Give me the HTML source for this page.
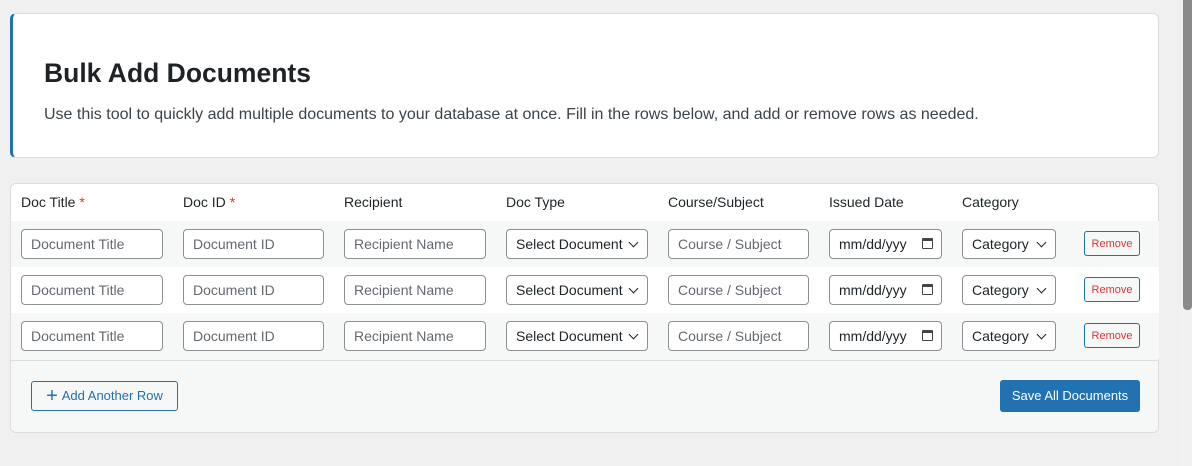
<!DOCTYPE html>
<html><head><style>
body{margin:0;width:1192px;height:466px;background:#f0f0f1;font-family:"Liberation Sans",sans-serif;position:relative;overflow:hidden;color:#1d2327}
.card{position:absolute;left:10px;width:1149px;background:#fff;border:1px solid #dcdcde;border-radius:6px;box-sizing:border-box}
h1{position:absolute;left:44px;top:58px;margin:0;font-size:26.5px;font-weight:600;line-height:30px}
.desc{position:absolute;left:44px;top:106px;font-size:16px;color:#3c434a}
.th{position:absolute;top:194px;font-size:14px;color:#1d2327}
.th b{color:#d63638;font-weight:400}
.row{position:absolute;left:11px;width:1148px;height:46px}
.in{position:absolute;height:30px;top:8px;border:1px solid #8c8f94;border-radius:4px;background:#fff;box-sizing:border-box;font-size:14px;line-height:28px;padding-left:9px;color:#646970;white-space:nowrap;overflow:hidden}
.sel{color:#1d2327}
.sel::after{content:"";position:absolute;right:10px;top:9px;width:6px;height:6px;border-right:1.6px solid #1d2327;border-bottom:1.6px solid #1d2327;transform:rotate(45deg)}
.dt{color:#1d2327}
.cal{position:absolute;right:8px;top:8px;width:11px;height:11px;border:1.5px solid #444;border-top-width:3px;box-sizing:border-box;border-radius:1px}
.rm{position:absolute;left:1073px;top:10px;width:56px;height:25px;border:1px solid #2271b1;border-radius:3px;box-sizing:border-box;font-size:11px;color:#d63638;display:flex;align-items:center;justify-content:center;background:#f6f7f7}
.btn{position:absolute;border-radius:3px;box-sizing:border-box;font-size:13px;text-align:center}
</style></head><body>
<div class="card" style="top:13px;height:145px;border-left:3px solid #2271b1;border-radius:6px"></div>
<h1>Bulk Add Documents</h1>
<div class="desc">Use this tool to quickly add multiple documents to your database at once. Fill in the rows below, and add or remove rows as needed.</div>
<div class="card" style="top:183px;height:250px;background:#f6f7f7;overflow:hidden">
<div style="position:absolute;left:0;top:0;width:100%;height:37px;background:#fff;border-bottom:1px solid #c3c4c7"></div>
<div style="position:absolute;left:0;top:176px;width:100%;height:1px;background:#dcdcde"></div>
</div>
<div class="th" style="left:21px">Doc Title <b>*</b></div>
<div class="th" style="left:183px">Doc ID <b>*</b></div>
<div class="th" style="left:344px">Recipient</div>
<div class="th" style="left:506px">Doc Type</div>
<div class="th" style="left:668px">Course/Subject</div>
<div class="th" style="left:829px">Issued Date</div>
<div class="th" style="left:962px">Category</div>

<div class="row" style="top:221px;background:#f6f7f7">
<div class="in" style="left:10px;width:142px">Document Title</div><div class="in" style="left:172px;width:141px">Document ID</div><div class="in" style="left:333px;width:142px">Recipient Name</div><div class="in sel" style="left:495px;width:142px">Select Document</div><div class="in" style="left:657px;width:141px">Course / Subject</div><div class="in dt" style="left:818px;width:113px">mm/dd/yyy<span class="cal"></span></div><div class="in sel" style="left:951px;width:94px">Category</div><div class="rm">Remove</div></div>
<div class="row" style="top:267px;background:#fff">
<div class="in" style="left:10px;width:142px">Document Title</div><div class="in" style="left:172px;width:141px">Document ID</div><div class="in" style="left:333px;width:142px">Recipient Name</div><div class="in sel" style="left:495px;width:142px">Select Document</div><div class="in" style="left:657px;width:141px">Course / Subject</div><div class="in dt" style="left:818px;width:113px">mm/dd/yyy<span class="cal"></span></div><div class="in sel" style="left:951px;width:94px">Category</div><div class="rm">Remove</div></div>
<div class="row" style="top:313px;background:#f6f7f7">
<div class="in" style="left:10px;width:142px">Document Title</div><div class="in" style="left:172px;width:141px">Document ID</div><div class="in" style="left:333px;width:142px">Recipient Name</div><div class="in sel" style="left:495px;width:142px">Select Document</div><div class="in" style="left:657px;width:141px">Course / Subject</div><div class="in dt" style="left:818px;width:113px">mm/dd/yyy<span class="cal"></span></div><div class="in sel" style="left:951px;width:94px">Category</div><div class="rm">Remove</div></div>

<div class="btn" style="left:31px;top:381px;width:147px;height:30px;border:1px solid #2271b1;color:#2271b1;line-height:28px;background:#f6f7f7"><span style="font-size:20px;vertical-align:-2px;margin-right:4px">+</span>Add Another Row</div>
<div class="btn" style="left:1000px;top:380px;width:140px;height:32px;background:#2271b1;color:#fff;line-height:32px">Save All Documents</div>
<div style="position:absolute;left:1181px;top:0;width:11px;height:466px;background:#f1f1f1"></div>
<div style="position:absolute;left:1183px;top:0;width:9px;height:310px;background:#8a8a8a;border-radius:0 0 4px 4px"></div>
</body></html>
